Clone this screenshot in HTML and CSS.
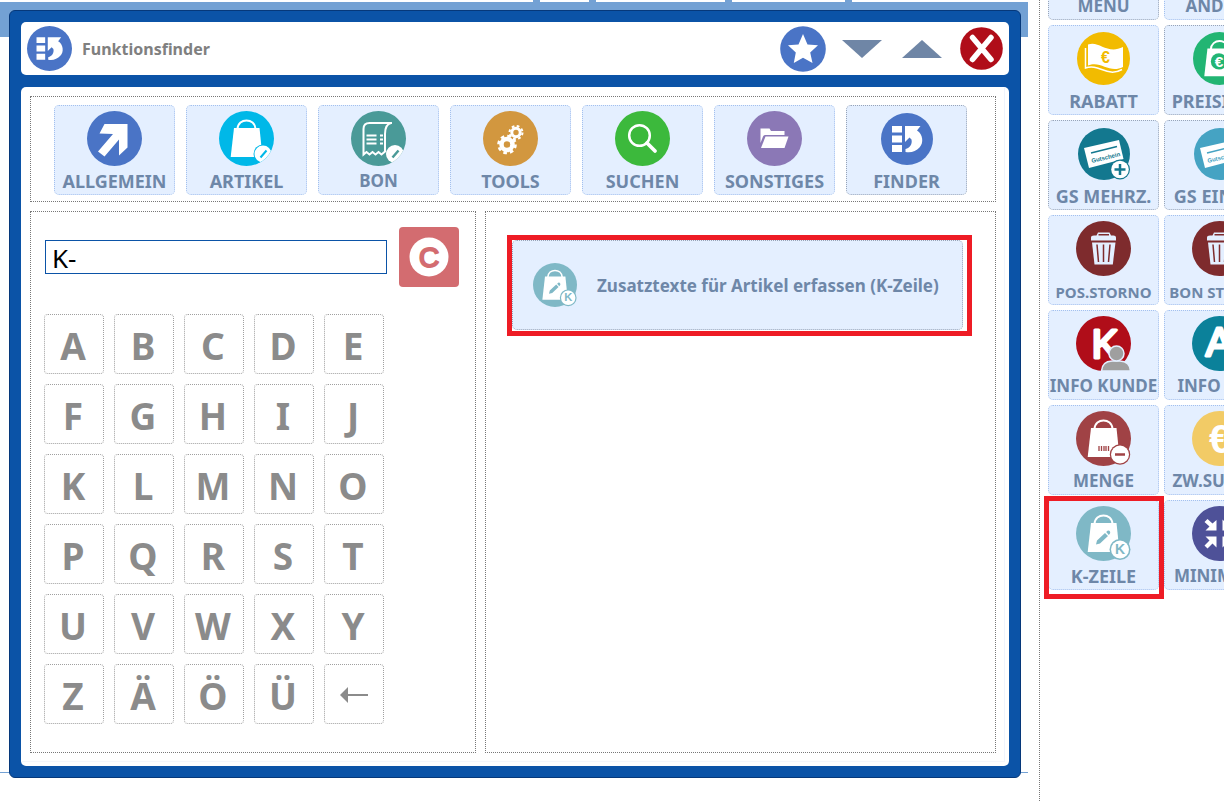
FILE: index.html
```html
<!DOCTYPE html>
<html lang="de">
<head>
  <meta charset="UTF-8" />
  <meta name="viewport" content="width=device-width, initial-scale=1.0" />
  <title>Funktionsfinder</title>
  <link rel="stylesheet" href="styles.css">
</head>
<body>
  <!-- shared icon parts -->
  <svg class="defs" width="0" height="0" aria-hidden="true">
    <clipPath id="disc"><circle cx="27.5" cy="27.5" r="27.5"/></clipPath>
    <symbol id="bag" viewBox="0 0 55 55">
      <path d="M15 17H40.5L43.5 46H11.7Z" fill="#fff"/>
      <path d="M18.5 18C19 6.500 36 6.500 36.500 18" fill="none" stroke="#fff" stroke-width="2"/>
    </symbol>
    <symbol id="finder" viewBox="0 0 52 52">
      <circle cx="26" cy="26" r="26" fill="#4a74c6"/>
      <path d="M11 13H21V19.500H11ZM11 22.500H21V29.500H11ZM11 32H21V39H11ZM24 13H39.500L36 17.500C42 21 43 30 38.500 34.500C35 38.500 30 40 24.500 39V36C29 35 31.500 31 30.500 26.500L28.500 24.500L24 29Z" fill="#fff"/>
    </symbol>
    <symbol id="kbag" viewBox="0 0 55 55">
      <circle cx="27.500" cy="27.500" r="27.500" fill="#7fb8c6"/>
      <use href="#bag"/>
      <path d="M20 38.500L21 34.500L29 27L32 30L24 37.500ZM30.200 26L31.500 24.800Q33 24 34 25.500Q34.600 26.800 33.800 27.800L32.800 29Z" fill="#7fb8c6"/>
      <circle cx="44" cy="43.500" r="10.500" fill="#7fb8c6"/>
      <circle cx="44" cy="43.500" r="9" fill="#fff"/>
    </symbol>
    <symbol id="bin" viewBox="0 0 55 55">
      <circle cx="27.500" cy="27.500" r="27.500" fill="#7e2b2d"/>
      <path d="M15 19.500V16.500Q15 14.500 18 14.500H20.500L22 11.500H33.500L35 14.500H37.500Q40 14.500 40 16.500V19.500ZM22.500 13V14.500H33V13Z" fill="#e4efff" fill-rule="evenodd"/>
      <path d="M16 21.500H39.500L36.800 43.500H18.500Z" fill="#e4efff"/>
      <path d="M21 23.500L22.500 41M27.500 23.500V41M34 23.500L32.500 41" stroke="#7e2b2d" stroke-width="1.500" fill="none"/>
    </symbol>
    <symbol id="voucher" viewBox="0 0 52 52">
      <path d="M6 20L41 12L45.500 31L11 40Z" fill="#fff"/>
      <path d="M13 25L39 18.500" stroke="currentColor" stroke-width="1.500"/>
    </symbol>
  </svg>

  <main class="stage">
    <div class="backdrop">
      <div class="backdrop-tabs"><i></i><i></i><i></i><i></i></div>
      <div class="backdrop-bar"></div>
    </div>

    <section class="window">
      <header class="titlebar">
        <svg class="title-icon" viewBox="0 0 52 52"><use href="#finder"/></svg>
        <h1>Funktionsfinder</h1>
        <div class="title-actions">
          <button class="star" aria-label="Favoriten">
            <svg width="46" height="46" viewBox="0 0 46 46"><circle cx="23" cy="23" r="22.800" fill="#4a74c6"/><path d="M23 8L27.500 18.500L38 19.300L30.200 26.600L32.500 37L23 31.700L13.800 37L15.800 26.600L8 19.300L18.500 18.500Z" fill="#fff"/></svg>
          </button>
          <button aria-label="Nach unten">
            <svg width="40" height="18" viewBox="0 0 40 18"><path d="M0 0H40L20 18Z" fill="#6f86a6"/></svg>
          </button>
          <button aria-label="Nach oben">
            <svg width="40" height="18" viewBox="0 0 40 18"><path d="M0 18H40L20 0Z" fill="#6f86a6"/></svg>
          </button>
          <button class="close" aria-label="Schließen">
            <svg width="43" height="43" viewBox="0 0 43 43"><circle cx="21.500" cy="21.500" r="21.300" fill="#b00d19"/><path d="M12.500 10.500L31 32.500M31 10.500L12.500 32.500" stroke="#fff" stroke-width="5.500" stroke-linecap="round"/></svg>
          </button>
        </div>
      </header>

      <div class="content">
        <div class="content-inner">
          <nav class="tabs">
            <button class="tile">
              <span class="icon"><svg width="55" height="55" viewBox="0 0 55 55"><circle cx="27.500" cy="27.500" r="27.500" fill="#4a74c6"/><path d="M17.500 13H40.500V36.500L32 44.500V28.500L17.500 45.500L11 40.500L26 23L12.500 22.500Z" fill="#fff"/></svg></span>
              <span class="label">ALLGEMEIN</span>
            </button>
            <button class="tile">
              <span class="icon"><svg width="55" height="55" viewBox="0 0 55 55"><circle cx="27.500" cy="27.500" r="27.500" fill="#00b8e8"/><use href="#bag"/><g clip-path="url(#disc)"><circle cx="44" cy="43" r="9.500" fill="#00b8e8"/><circle cx="44" cy="43" r="8.500" fill="#fff"/></g><path d="M41.500 46.500L47.500 39.500" stroke="#00b8e8" stroke-width="2"/></svg></span>
              <span class="label">ARTIKEL</span>
            </button>
            <button class="tile">
              <span class="icon"><svg width="55" height="55" viewBox="0 0 55 55"><circle cx="27.500" cy="27.500" r="27.500" fill="#4a9a98"/><path d="M41 12H18.500Q12.500 12 12.500 18V43.500L15.500 41L18.500 43.500L21.500 41L24.500 43.500L27.500 41L30.500 43.500L34 40.500V23Q34 13.500 40 12" fill="none" stroke="#fff" stroke-width="2"/><path d="M15.500 24.500H25.500M15.500 28.500H25.500M15.500 32.500H25.500M29 24.500H32M29 28.500H32M29 32.500H32" stroke="#fff" stroke-width="1.800"/><circle cx="44" cy="43" r="9" fill="#fff" clip-path="url(#disc)"/><path d="M41.500 46.500L47.500 39.500" stroke="#4a9a98" stroke-width="2.500"/></svg></span>
              <span class="label medium">BON</span>
            </button>
            <button class="tile">
              <span class="icon"><svg width="55" height="55" viewBox="0 0 55 55"><circle cx="27.500" cy="27.500" r="27.500" fill="#d2973f"/><g fill="none" stroke="#fff"><circle cx="24" cy="33.500" r="5.500" stroke-width="4.500"/><circle cx="24" cy="33.500" r="8.500" stroke-width="2.600" stroke-dasharray="3.600 3.076"/><circle cx="33" cy="21.500" r="4.200" stroke-width="3"/><circle cx="33" cy="21.500" r="6.500" stroke-width="2" stroke-dasharray="2.700 2.400"/></g></svg></span>
              <span class="label">TOOLS</span>
            </button>
            <button class="tile">
              <span class="icon"><svg width="55" height="55" viewBox="0 0 55 55"><circle cx="27.500" cy="27.500" r="27.500" fill="#3cb93c"/><circle cx="24.500" cy="24.500" r="10.300" fill="none" stroke="#fff" stroke-width="2.500"/><path d="M32 32L40 40" stroke="#fff" stroke-width="3.800" stroke-linecap="round"/></svg></span>
              <span class="label">SUCHEN</span>
            </button>
            <button class="tile">
              <span class="icon"><svg width="55" height="55" viewBox="0 0 55 55"><circle cx="27.500" cy="27.500" r="27.500" fill="#8b78b6"/><path d="M13.500 17.500H22.500L24 20H37.500V24H18Q16.500 24 16 25.500L13.500 32Z" fill="#fff"/><path d="M18.500 25.500H41.500L37.500 37H14Z" fill="#fff"/></svg></span>
              <span class="label">SONSTIGES</span>
            </button>
            <button class="tile grey">
              <span class="icon"><svg width="52" height="52" viewBox="0 0 52 52"><use href="#finder"/></svg></span>
              <span class="label">FINDER</span>
            </button>
          </nav>

          <div class="panels">
            <section class="panel search">
              <div class="search-row">
                <input type="text" value="K-" aria-label="Suchbegriff">
                <button class="clear" aria-label="Löschen">
                  <svg width="40" height="40" viewBox="0 0 40 40"><circle cx="20" cy="20" r="19.500" fill="#fff"/><text x="20" y="30" class="clear-c">C</text></svg>
                </button>
              </div>
              <div class="keys">
                <button>A</button><button>B</button><button>C</button><button>D</button><button>E</button>
                <button>F</button><button>G</button><button>H</button><button>I</button><button>J</button>
                <button>K</button><button>L</button><button>M</button><button>N</button><button>O</button>
                <button>P</button><button>Q</button><button>R</button><button>S</button><button>T</button>
                <button>U</button><button>V</button><button>W</button><button>X</button><button>Y</button>
                <button>Z</button><button>Ä</button><button>Ö</button><button>Ü</button>
                <button class="back" aria-label="Zurück"><svg width="28" height="16" viewBox="0 0 28 16"><path d="M0 8L8 0V7H28V9H8V16Z" fill="#8b8b8b"/></svg></button>
              </div>
            </section>

            <section class="panel results">
              <div class="highlight">
                <button class="result">
                  <svg width="44" height="44" viewBox="0 0 55 55"><use href="#kbag"/><text x="44" y="48" class="badge-k">K</text></svg>
                  <span>Zusatztexte für Artikel erfassen (K-Zeile)</span>
                </button>
              </div>
            </section>
          </div>
        </div>
      </div>
    </section>
  </main>

  <aside class="sidebar">
    <div class="side-grid">
      <button class="tile grey"><span class="icon"></span><span class="label medium">MENÜ</span></button>
      <button class="tile"><span class="icon"></span><span class="label medium">ANDERE</span></button>

      <button class="tile">
        <span class="icon"><svg width="53" height="53" viewBox="0 0 53 53"><circle cx="26.500" cy="26.500" r="26.500" fill="#f2bb00"/><path d="M11 12.500C22 8 30 23 46 15V35C32 42 24 28 11 33.500Z" fill="#fff"/><path d="M8.500 16V36C22 31 30 46 45 37.500" fill="none" stroke="#fff" stroke-width="1.500"/><text x="28.500" y="31" class="euro-note">€</text></svg></span>
        <span class="label">RABATT</span>
      </button>
      <button class="tile grey">
        <span class="icon"><svg width="53" height="53" viewBox="0 0 55 55"><circle cx="27.500" cy="27.500" r="27.500" fill="#22b573"/><use href="#bag"/><circle cx="27" cy="30.500" r="8.500" fill="#22b573"/><text x="27" y="36" class="euro-bag">€</text></svg></span>
        <span class="label">PREISINFO</span>
      </button>

      <button class="tile grey">
        <span class="icon teal"><svg width="52" height="52" viewBox="0 0 52 52"><circle cx="26" cy="26" r="26" fill="#13788f"/><use href="#voucher"/><text x="14" y="35" transform="rotate(-14 14 35)" class="voucher-text">Gutschein</text><circle cx="42" cy="41.500" r="10" fill="#13788f"/><circle cx="42" cy="41.500" r="8.800" fill="#fff"/><path d="M36.500 41.500H47.500M42 36V47" stroke="#13788f" stroke-width="2.500"/></svg></span>
        <span class="label">GS MEHRZ.</span>
      </button>
      <button class="tile grey">
        <span class="icon sky"><svg width="52" height="52" viewBox="0 0 52 52"><circle cx="26" cy="26" r="26" fill="#45a3c3"/><use href="#voucher"/><text x="14" y="35" transform="rotate(-14 14 35)" class="voucher-text">Gutschein</text></svg></span>
        <span class="label">GS EINZW.</span>
      </button>

      <button class="tile">
        <span class="icon"><svg width="55" height="55" viewBox="0 0 55 55"><use href="#bin"/></svg></span>
        <span class="label small">POS.STORNO</span>
      </button>
      <button class="tile">
        <span class="icon"><svg width="55" height="55" viewBox="0 0 55 55"><use href="#bin"/></svg></span>
        <span class="label small">BON STORNO</span>
      </button>

      <button class="tile">
        <span class="icon"><svg width="55" height="55" viewBox="0 0 55 55"><circle cx="27.500" cy="27.500" r="27.500" fill="#b00d19"/><text x="29" y="42" class="letter">K</text><path d="M25.500 55Q26 45.500 36 45H44Q54 45.500 54.500 55Z" fill="#9f9f9f" stroke="#e4efff" stroke-width="1.500"/><circle cx="40.500" cy="37.500" r="7.500" fill="#9f9f9f" stroke="#e4efff" stroke-width="1.500"/></svg></span>
        <span class="label medium">INFO KUNDE</span>
      </button>
      <button class="tile">
        <span class="icon"><svg width="55" height="55" viewBox="0 0 55 55"><circle cx="27.500" cy="27.500" r="27.500" fill="#0b819a"/><text x="27" y="40" class="letter">A</text></svg></span>
        <span class="label medium">INFO ART.</span>
      </button>

      <button class="tile">
        <span class="icon"><svg width="55" height="55" viewBox="0 0 55 55"><circle cx="27.500" cy="27.500" r="27.500" fill="#a04245"/><use href="#bag"/><path d="M23 35V40M25.500 35V40M28 35V40M30 35V40M32.500 35V40" stroke="#a04245" stroke-width="1.300"/><circle cx="44" cy="43.500" r="10.200" fill="#a04245"/><circle cx="44" cy="43.500" r="9" fill="#fff"/><path d="M39 43.500H49" stroke="#a04245" stroke-width="2.500"/></svg></span>
        <span class="label medium">MENGE</span>
      </button>
      <button class="tile">
        <span class="icon"><svg width="55" height="55" viewBox="0 0 55 55"><circle cx="27.500" cy="27.500" r="27.500" fill="#f2cb66"/><text x="28" y="42" class="euro-big">€</text></svg></span>
        <span class="label medium">ZW.SUMME</span>
      </button>

      <button class="tile marked">
        <span class="icon"><svg width="55" height="55" viewBox="0 0 55 55"><use href="#kbag"/><text x="44" y="48" class="badge-k">K</text></svg></span>
        <span class="label">K-ZEILE</span>
      </button>
      <button class="tile">
        <span class="icon"><svg width="55" height="55" viewBox="0 0 55 55"><circle cx="27.500" cy="27.500" r="27.500" fill="#4e5198"/><path d="M24.500 24.500H13.500L17.500 20.500L12.500 16L15.500 13L20.500 17.500L24.500 14ZM24.500 30.500V41.500L20.500 37.500L15.500 42.500L12.500 39.500L17.500 34.500L13.500 30.500ZM30.500 24.500V13.500L34.500 17.500L39.500 13L42.500 16L37.500 20.500L41.500 24.500ZM30.500 30.500H41.500L37.500 34.500L42.500 39.500L39.500 42.500L34.500 37.500L30.500 41.500Z" fill="#fff"/></svg></span>
        <span class="label medium">MINIMIER.</span>
      </button>
    </div>
  </aside>
</body>
</html>
```
FILE: styles.css
```css
* {
  box-sizing: border-box;
}
body {
  display: flex;
  margin: 0;
  min-height: 100vh;
  overflow: hidden;
  background: #fff;
  font-family: "Noto Sans", sans-serif;
}
button {
  margin: 0;
  padding: 0;
  border: none;
  background: none;
  font-family: inherit;
  cursor: pointer;
}
svg {
  display: block;
  flex-shrink: 0;
}
.defs {
  position: absolute;
}

/* main area */
.stage {
  position: relative;
  flex: 1;
  min-width: 0;
  padding: 10px 18px 0 9px;
}
.backdrop {
  position: absolute;
  top: 0;
  left: 0;
  right: 11px;
  height: 773px;
  border-bottom: 1px solid #73a1d4;
}
.backdrop-tabs {
  display: flex;
  gap: 49px;
  height: 2px;
  padding-left: 533px;
}
.backdrop-tabs i {
  width: 7px;
  background: #73a1d4;
}
.backdrop-tabs i:nth-child(3) {
  margin-left: 80px;
}
.backdrop-tabs i:nth-child(4) {
  margin-left: 64px;
}
.backdrop-bar {
  height: 35px;
  background: #73a1d4;
}
.window {
  position: relative;
  display: flex;
  flex-direction: column;
  gap: 12px;
  padding: 11px;
  border: 1px solid #06387a;
  border-radius: 6px;
  background: #0b53a7;
}
.titlebar {
  display: flex;
  align-items: center;
  height: 53px;
  padding: 0 6px;
  border-radius: 5px;
  background: #fff;
}
.title-icon {
  width: 45px;
  height: 45px;
}
.titlebar h1 {
  margin: 0 0 0 10px;
  font-size: 16px;
  line-height: 20px;
  color: #808080;
}
.title-actions {
  display: flex;
  align-items: center;
  gap: 20px;
  margin-left: auto;
}
.star {
  margin-right: -4px;
}
.close {
  margin-left: -2px;
}
.content {
  padding: 0 4px 4px 0;
  border-radius: 5px;
  background: #fff;
}
.content-inner {
  padding: 9px 8px 8px 9px;
  border-right: 1px solid #eff4fd;
  border-bottom: 1px solid #f4f6fb;
}

/* tiles */
.tabs {
  display: flex;
  gap: 11px;
  padding: 8px 23px 6px;
  border: 1px dotted #777;
}
.tabs .tile {
  width: 121px;
}
.tile {
  position: relative;
  display: flex;
  flex-direction: column;
  align-items: center;
  gap: 5px;
  height: 90px;
  padding-top: 5px;
  border: 1px dotted #a3c0ee;
  border-radius: 5px;
  background: #e4efff;
}
.tile.grey {
  border-color: #97a4b8;
}
.icon {
  display: flex;
  align-items: center;
  justify-content: center;
  height: 55px;
}
.label {
  font-size: 18px;
  font-weight: bold;
  line-height: 20px;
  white-space: nowrap;
  color: #6e87a8;
}
.label.medium {
  font-size: 17px;
}
.label.small {
  font-size: 15px;
  line-height: 22px;
}

/* search panel */
.panels {
  display: grid;
  grid-template-columns: minmax(0, 446fr) minmax(0, 511fr);
  gap: 9px;
  margin-top: 9px;
}
.panel {
  border: 1px dotted #777;
}
.search {
  padding: 15px 16px 28px 13px;
}
.search-row {
  display: flex;
  align-items: center;
  gap: 12px;
  padding-left: 1px;
}
.search-row input {
  flex: 1;
  min-width: 0;
  height: 34px;
  padding: 2px 6px 0;
  border: 1px solid #0b53a7;
  font-family: "Noto Sans", sans-serif;
  font-size: 26px;
  line-height: 30px;
  color: #000;
}
.search-row input:focus {
  outline: none;
}
.clear {
  display: flex;
  align-items: center;
  justify-content: center;
  width: 60px;
  height: 60px;
  border-radius: 4px;
  background: #d36c70;
}
.keys {
  display: grid;
  grid-template-columns: repeat(5, 60px);
  grid-auto-rows: 60px;
  gap: 10px;
  margin-top: 27px;
}
.keys button {
  display: flex;
  align-items: center;
  justify-content: center;
  padding: 4px 2px 0 0;
  border: 1px dotted #a0a0a0;
  border-radius: 4px;
  font-size: 37px;
  font-weight: bold;
  line-height: 50px;
  color: #8b8b8b;
}
.keys .back {
  padding: 2px 0 0;
}

/* results */
.results {
  padding: 23px 23px 0 21px;
}
.highlight {
  padding: 0 4px 1px 0;
  border: 5px solid #ee1c25;
}
.result {
  display: flex;
  align-items: center;
  gap: 20px;
  width: 100%;
  height: 90px;
  padding-left: 20px;
  border: 1px dotted #97a4b8;
  border-radius: 5px;
  background: #e4efff;
  font-size: 17px;
  font-weight: bold;
  white-space: nowrap;
  color: #6e87a8;
}

/* right button column */
.sidebar {
  width: 185px;
  height: 100vh;
  padding-left: 8px;
  border-left: 1px dotted #777;
  overflow: hidden;
}
.side-grid {
  display: grid;
  grid-template-columns: 111px 111px;
  gap: 5px;
  margin-top: -70px;
}
.marked {
  z-index: 1;
}
.marked::after {
  content: "";
  position: absolute;
  top: -5px;
  right: -6px;
  bottom: -10px;
  left: -5px;
  border: 5px solid #ee1c25;
}

/* text inside icons */
.icon.teal {
  color: #13788f;
}
.icon.sky {
  color: #45a3c3;
}
.badge-k,
.euro-note,
.euro-bag,
.euro-big {
  font-family: "Liberation Sans", sans-serif;
  font-weight: bold;
  text-anchor: middle;
}
.clear-c,
.letter {
  font-family: "Liberation Sans", sans-serif;
  text-anchor: middle;
  stroke-linejoin: round;
}
.badge-k {
  font-size: 14px;
  fill: #7fb8c6;
}
.clear-c {
  font-size: 28px;
  fill: #d36c70;
  stroke: #d36c70;
  stroke-width: 2px;
}
.letter {
  font-size: 40px;
  fill: #fff;
  stroke: #fff;
  stroke-width: 3px;
}
.euro-note {
  font-size: 16px;
  fill: #f2bb00;
}
.euro-bag {
  font-size: 16px;
  fill: #fff;
}
.euro-big {
  font-size: 40px;
  fill: #fff;
}
.voucher-text {
  font-family: "Liberation Sans", sans-serif;
  font-size: 6px;
  font-weight: bold;
  fill: currentColor;
}
```
